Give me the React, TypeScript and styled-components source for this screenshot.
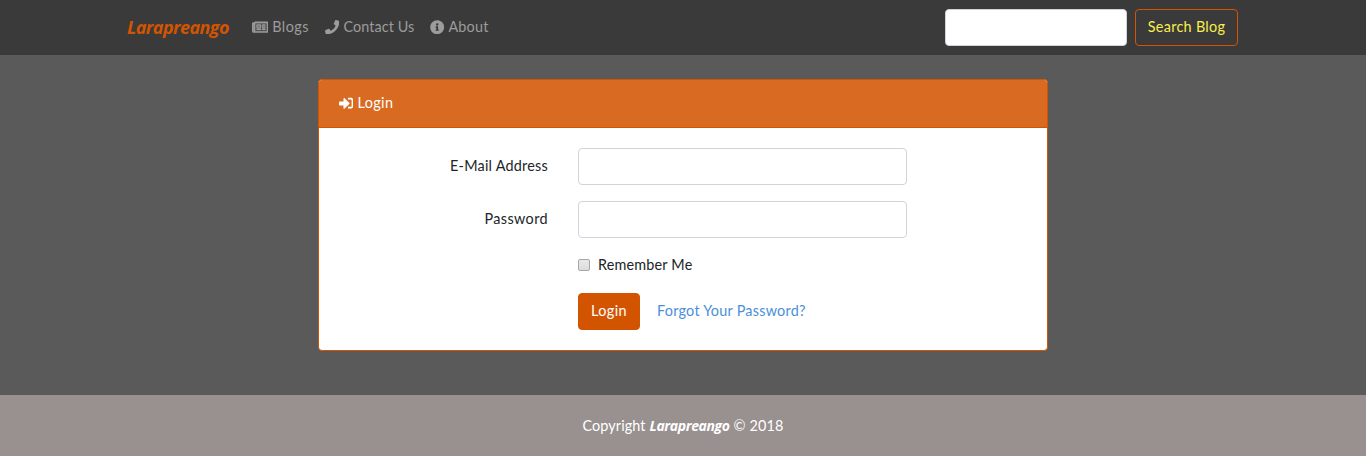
import React from 'react';
import styled, { createGlobalStyle } from 'styled-components';
import { FaRegNewspaper, FaPhone, FaInfoCircle, FaSignInAlt } from 'react-icons/fa';

const GlobalStyle = createGlobalStyle`
  *, *::before, *::after { box-sizing: border-box; }
  body {
    margin: 0;
    font-family: Lato, "Liberation Sans", sans-serif;
    font-size: 14.4px;
    line-height: 1.6;
    color: #212529;
    background: #5a5a5a;
  }
`;

const Page = styled.div`
  min-height: 456px;
  display: flex;
  flex-direction: column;
`;

const Navbar = styled.nav`
  height: 55px;
  background: #3a3a3a;
  padding: 0 128px 0 127px;
  display: flex;
  align-items: center;
`;

const Script = styled.span<{ $size: number; $spacing: number }>`
  font-family: "Open Sans", "Noto Sans", sans-serif;
  font-style: italic;
  font-weight: 700;
  font-size: ${(p) => p.$size}px;
  letter-spacing: ${(p) => p.$spacing}px;
  line-height: 1;
`;

const Brand = styled.a`
  width: 125px;
  padding-bottom: 2px;
  color: #d35400;
  display: flex;
`;

const Label = styled.span<{ $spacing?: number }>`
  display: inline-block;
  padding-bottom: 2px;
  letter-spacing: ${(p) => p.$spacing ?? 0}px;
  white-space: nowrap;
`;

const NavLink = styled.a<{ $width: number; $icon?: number; $stroke?: number }>`
  width: ${(p) => p.$width}px;
  display: flex;
  align-items: center;
  gap: 4px;
  color: #9c9c9c;
  svg {
    flex: none;
    height: 14.4px;
    width: ${(p) => p.$icon ?? 14.4}px;
    margin-bottom: 1px;
    stroke-width: ${(p) => p.$stroke ?? 0};
  }
`;

const Search = styled.form`
  margin-left: auto;
  display: flex;
  gap: 8px;
`;

const Input = styled.input<{ $width: number }>`
  width: ${(p) => p.$width}px;
  height: 37px;
  padding: 6px 12px;
  border: 1px solid #ced4da;
  border-radius: 4px;
  background: #fff;
  font: inherit;
`;

const Button = styled.button<{ $width: number; $outline?: boolean }>`
  width: ${(p) => p.$width}px;
  height: 37px;
  padding: 0;
  border: 1px solid #d35400;
  border-radius: 4px;
  background: ${(p) => (p.$outline ? 'transparent' : '#d35400')};
  color: ${(p) => (p.$outline ? '#f9ee4b' : '#fff')};
  font: inherit;
`;

const Main = styled.main`
  flex: 1;
  padding-top: 24px;
`;

const Card = styled.section`
  width: 730px;
  height: 272px;
  margin: 0 auto;
  border: 1px solid #d35400;
  border-radius: 4px;
  background: #fff;
  overflow: hidden;
`;

const CardHeader = styled.header`
  height: 48px;
  padding-left: 20px;
  display: flex;
  align-items: center;
  gap: 4px;
  background: #d96a22;
  border-bottom: 1px solid #d35400;
  color: #fff;
`;

const CardBody = styled.form`
  padding-top: 20px;
`;

const Row = styled.div<{ $height: number; $gap: number }>`
  height: ${(p) => p.$height}px;
  margin-bottom: ${(p) => p.$gap}px;
  display: grid;
  grid-template-columns: 229px 1fr;
  column-gap: 30px;
  align-items: center;
`;

const FieldName = styled.label`
  text-align: right;
`;

const Cell = styled.div`
  grid-column: 2;
  display: flex;
  align-items: center;
`;

const Checkbox = styled.input`
  appearance: none;
  width: 12px;
  height: 12px;
  margin: 0 8px 2px 0;
  border: 1px solid #a6a6a6;
  border-radius: 2px;
  background: linear-gradient(#e9e9e9, #dcdcdc);
`;

const Forgot = styled.a`
  margin-left: 17px;
  color: #4a90d9;
`;

const Footer = styled.footer`
  height: 61px;
  padding-top: 2px;
  background: #999090;
  color: #fff;
  display: flex;
  align-items: center;
  justify-content: center;
  gap: 4px;

  ${Script} { padding-bottom: 2px; }
`;

export default function App() {
  return (
    <Page>
      <GlobalStyle />
      <Navbar>
        <Brand><Script $size={18} $spacing={-0.6}>Larapreango</Script></Brand>
        <NavLink $width={73} $icon={16.2} $stroke={18}><FaRegNewspaper /><Label $spacing={0.45}>Blogs</Label></NavLink>
        <NavLink $width={105}><FaPhone /><Label $spacing={0.1}>Contact Us</Label></NavLink>
        <NavLink $width={60}><FaInfoCircle /><Label $spacing={0.2}>About</Label></NavLink>
        <Search>
          <Input $width={182} aria-label="Search" />
          <Button type="button" $width={103} $outline><Label $spacing={0.3}>Search Blog</Label></Button>
        </Search>
      </Navbar>
      <Main>
        <Card>
          <CardHeader><FaSignInAlt /><Label $spacing={0.4}>Login</Label></CardHeader>
          <CardBody>
            <Row $height={37} $gap={16}>
              <FieldName htmlFor="email"><Label $spacing={0.23}>E-Mail Address</Label></FieldName>
              <Input id="email" $width={329} />
            </Row>
            <Row $height={37} $gap={15}>
              <FieldName htmlFor="password"><Label $spacing={0.4}>Password</Label></FieldName>
              <Input id="password" type="password" $width={329} />
            </Row>
            <Row $height={25} $gap={15}>
              <Cell><Checkbox id="remember" type="checkbox" /><label htmlFor="remember"><Label $spacing={0.18}>Remember Me</Label></label></Cell>
            </Row>
            <Row $height={37} $gap={0}>
              <Cell>
                <Button type="button" $width={62}><Label $spacing={0.4}>Login</Label></Button>
                <Forgot><Label $spacing={0.25}>Forgot Your Password?</Label></Forgot>
              </Cell>
            </Row>
          </CardBody>
        </Card>
      </Main>
      <Footer>
        <Label $spacing={0.1}>Copyright</Label>
        <Script $size={14} $spacing={-0.4}>Larapreango</Script>
        <Label $spacing={0.15}>© 2018</Label>
      </Footer>
    </Page>
  );
}
